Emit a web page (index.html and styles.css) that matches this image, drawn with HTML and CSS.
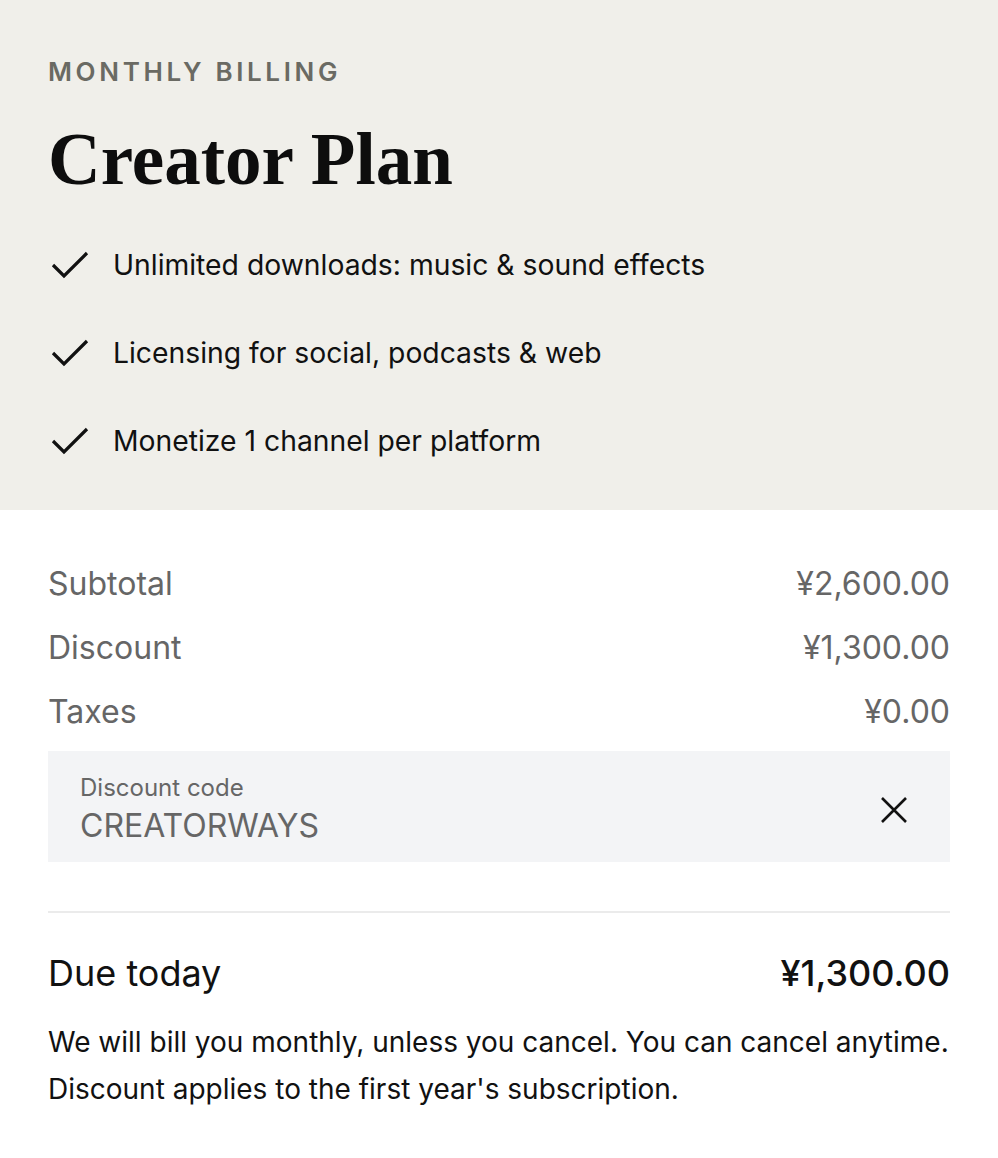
FILE: index.html
```html
<!DOCTYPE html>
<html>
<head>
<meta charset="utf-8">
<link rel="stylesheet" href="styles.css">
</head>
<body>
<section class="plan">
  <div class="eyebrow">MONTHLY BILLING</div>
  <h1 class="title">Creator Plan</h1>
  <ul class="features">
    <li><svg class="check" viewBox="0 0 40 28"><path d="M3 14 L14 25 L37 2" fill="none" stroke="#111" stroke-width="3.2"/></svg><span>Unlimited downloads: music &amp; sound effects</span></li>
    <li><svg class="check" viewBox="0 0 40 28"><path d="M3 14 L14 25 L37 2" fill="none" stroke="#111" stroke-width="3.2"/></svg><span>Licensing for social, podcasts &amp; web</span></li>
    <li><svg class="check" viewBox="0 0 40 28"><path d="M3 14 L14 25 L37 2" fill="none" stroke="#111" stroke-width="3.2"/></svg><span>Monetize 1 channel per platform</span></li>
  </ul>
</section>
<section class="summary">
  <div class="row"><span>Subtotal</span><span>¥2,600.00</span></div>
  <div class="row"><span>Discount</span><span>¥1,300.00</span></div>
  <div class="row"><span>Taxes</span><span>¥0.00</span></div>
  <div class="code">
    <div class="code-text">
      <div class="code-label">Discount code</div>
      <div class="code-value">CREATORWAYS</div>
    </div>
    <svg class="close" viewBox="0 0 28 28"><path d="M2 2 L26 26 M26 2 L2 26" fill="none" stroke="#111" stroke-width="2.6"/></svg>
  </div>
  <hr class="divider">
  <div class="due"><span>Due today</span><span class="due-amount">¥1,300.00</span></div>
  <p class="note">We will bill you monthly, unless you cancel. You can cancel anytime.<br>Discount applies to the first year's subscription.</p>
</section>
</body>
</html>
```
FILE: styles.css
```css
* { box-sizing: border-box; }
body {
  margin: 0;
  font-family: Inter, "Noto Sans", sans-serif;
  color: #111;
  background: #fff;
}
.plan {
  background: #f0efea;
  padding: 57px 48px 40px;
  height: 510px;
}
.eyebrow {
  font-size: 26px;
  font-weight: 600;
  letter-spacing: 0.14em;
  color: #6a6a63;
  line-height: 30px;
}
.title {
  margin: 33px 0 0;
  font-family: "Liberation Serif", serif;
  font-weight: 700;
  font-size: 73px;
  line-height: 80px;
  color: #0d0d0d;
}
.features {
  list-style: none;
  margin: 21px 0 0;
  padding: 0;
}
.features li {
  display: flex;
  align-items: center;
  height: 88px;
  font-size: 28.3px;
}
.check {
  width: 40px;
  height: 28px;
  margin: 0 23px 0 2px;
}
.summary {
  padding: 41px 48px 48px;
}
.row {
  display: flex;
  justify-content: space-between;
  align-items: center;
  height: 64px;
  font-size: 32px;
  color: #666;
}
.code {
  margin-top: 8px;
  background: #f3f4f6;
  height: 111px;
  display: flex;
  align-items: flex-start;
  justify-content: space-between;
  padding: 22px 42px 0 32px;
}
.code-label {
  font-size: 24px;
  color: #666;
  line-height: 30px;
  margin-bottom: 2px;
}
.code-value {
  font-size: 32px;
  color: #666;
  line-height: 42px;
}
.close {
  width: 28px;
  height: 28px;
  margin-top: 23px;
}
.divider {
  border: 0;
  border-top: 2px solid #ebebeb;
  margin: 49px 0 0;
}
.due {
  display: flex;
  justify-content: space-between;
  align-items: center;
  margin-top: 36px;
  font-size: 36px;
  line-height: 48px;
}
.due-amount {
  font-weight: 500;
}
.note {
  margin: 22px 0 0;
  font-size: 28px;
  line-height: 47px;
}
```
